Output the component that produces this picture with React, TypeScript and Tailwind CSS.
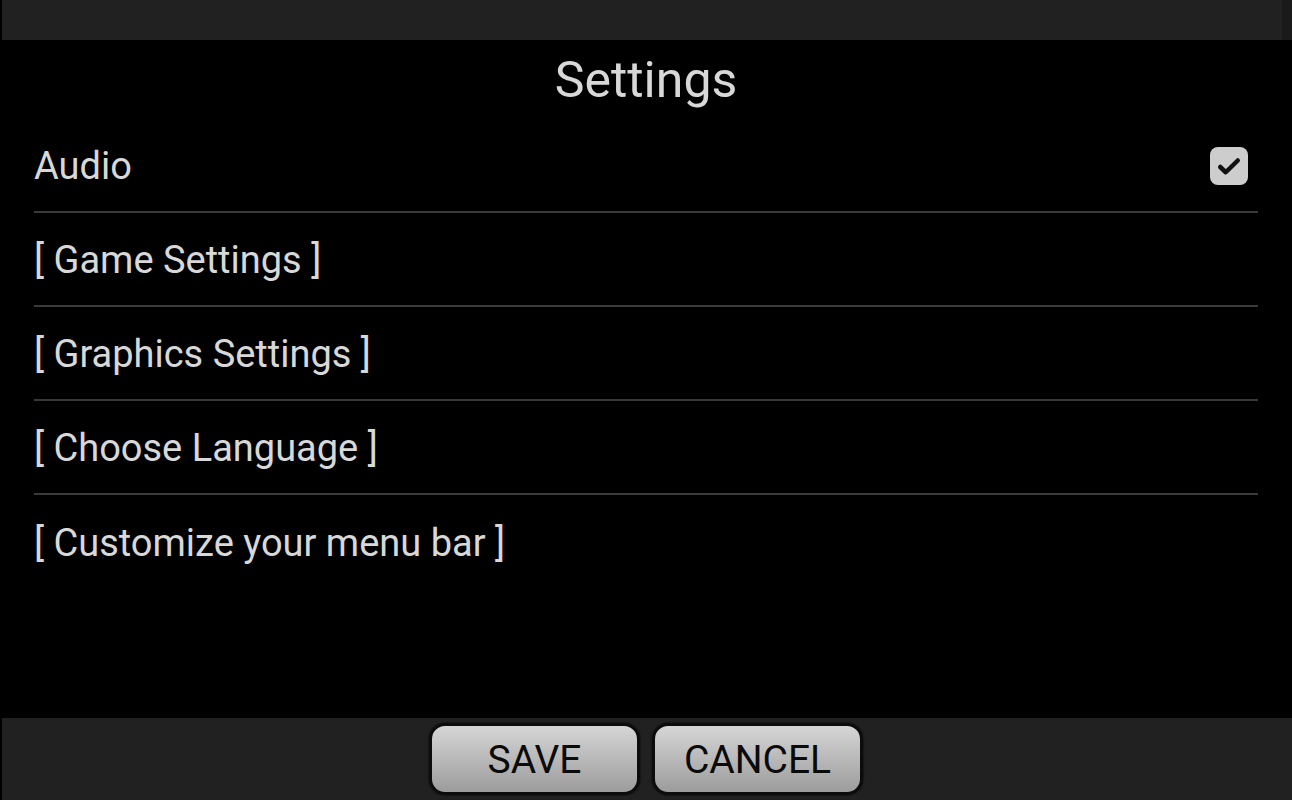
import React from "react";

const items = ["[ Game Settings ]", "[ Graphics Settings ]", "[ Choose Language ]", "[ Customize your menu bar ]"];

const Check = () => (
  <div className="mr-[10px] grid h-[38px] w-[38px] place-items-center rounded-[8px] bg-[#cdcdcd]">
    <svg width="30" height="30" viewBox="0 0 24 24">
      <path d="M5 12.8l4.4 4.2L19 7.6" fill="none" stroke="#111" strokeWidth="3.6" strokeLinecap="round" strokeLinejoin="round" />
    </svg>
  </div>
);

const Btn = ({ label }: { label: string }) => (
  <button className="h-[72px] w-[211px] rounded-[16px] border-[3px] border-[#0c0c0c] bg-gradient-to-b from-[#d6d6d6] to-[#9c9c9c] pt-[2px] text-[39px] text-[#0a0a0a] shadow-[0_0_2px_#000]">
    {label}
  </button>
);

export default function App() {
  return (
    <div className="flex h-[800px] w-[1292px] flex-col bg-black font-['Roboto',sans-serif]">
      <div className="h-[40px] shrink-0 border-l-2 border-r-[10px] border-l-black border-r-[#1a1a1a] bg-[#212121]" />
      <div className="flex flex-1 flex-col px-[34px]">
        <h1 className="flex h-[79px] shrink-0 items-center justify-center text-[50px] leading-none text-[#d8d8d8]">Settings</h1>
        <div className="flex h-[94px] items-center justify-between border-b-2 border-[#3a3a3a] pt-[2px] text-[38px] text-[#d8d8d8]">
          <span>Audio</span>
          <Check />
        </div>
        {items.map((t, i) => (
          <div
            key={t}
            className={
              i < items.length - 1
                ? "flex h-[94px] items-center border-b-2 border-[#3a3a3a] pt-[3px] text-[38px] text-[#d8d8d8]"
                : "flex h-[94px] items-center pt-[3px] text-[38px] text-[#d8d8d8]"
            }
          >
            {t}
          </div>
        ))}
      </div>
      <div className="flex h-[82px] shrink-0 items-center justify-center gap-[12px] border-l-2 border-black bg-[#212121] pr-[2px]">
        <Btn label="SAVE" />
        <Btn label="CANCEL" />
      </div>
    </div>
  );
}
